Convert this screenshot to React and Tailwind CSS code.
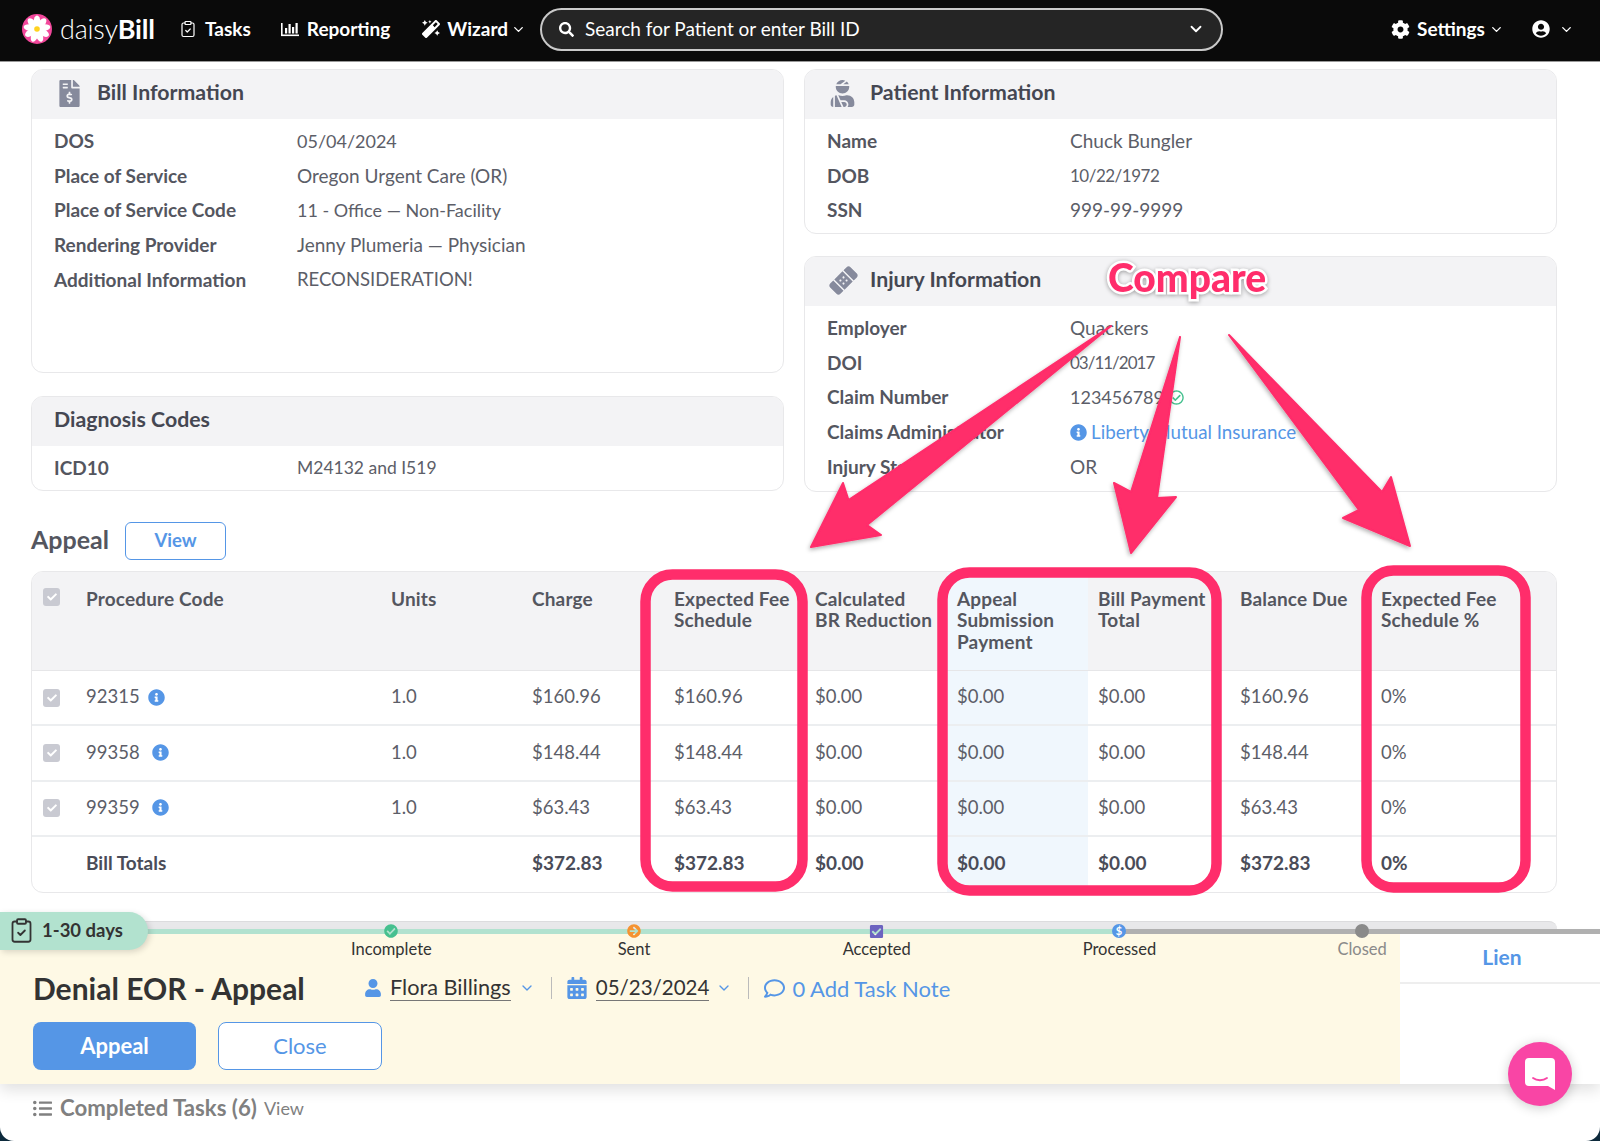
import React from 'react';
import { ChevronDown, ClipboardCheck } from 'lucide-react';
import {
  FaBandAid, FaCalendarAlt, FaCheck, FaCheckCircle, FaArrowCircleRight, FaCheckSquare,
  FaCog, FaFileInvoiceDollar, FaInfoCircle, FaListUl, FaMagic, FaRegComment, FaSearch, FaUser, FaUserCircle, FaUserInjured, FaRegCheckCircle,
} from 'react-icons/fa';

const FONT = "font-['Lato','Open_Sans',sans-serif]";

// === COLUMN GRID FOR THE APPEAL TABLE ===
const COLS = 'grid grid-cols-[44px_305px_141px_142px_141px_142px_141px_142px_141px_1fr]';

const rows = [
  { code: '92315', charge: '$160.96', gap: 'ml-[8px]' },
  { code: '99358', charge: '$148.44', gap: 'ml-[12px]' },
  { code: '99359', charge: '$63.43', gap: 'ml-[12px]' },
];

const Logo = () => (
  <svg width="30" height="30" viewBox="0 0 30 30">
    <circle cx="15" cy="15" r="15" fill="#f2479b" />
    {[0, 40, 80, 120, 160, 200, 240, 280, 320].map((a) => (
      <ellipse key={a} cx="15" cy="7.5" rx="3.3" ry="6" fill="#fff" transform={`rotate(${a} 15 15)`} />
    ))}
    <circle cx="15" cy="15" r="2.8" fill="#ffd21f" />
  </svg>
);

const ReportIcon = () => (
  <svg width="18" height="16" viewBox="0 0 18 16" fill="#fff">
    <rect x="0" y="13.5" width="18" height="1.6" />
    <rect x="0" y="2" width="1.6" height="12" />
    <rect x="4" y="7" width="2.2" height="5.5" />
    <rect x="7.5" y="3" width="2.2" height="9.5" />
    <rect x="11" y="6" width="2.2" height="6.5" />
    <rect x="14.5" y="2" width="2.2" height="10.5" />
  </svg>
);

const Checkbox = () => (
  <div className="flex h-[18px] w-[17px] items-center justify-center rounded-[3px] bg-[#c9cad2]">
    <FaCheck className="text-[10px] text-white" />
  </div>
);

const Card = ({ icon, title, className, children }) => (
  <div className={`overflow-hidden rounded-xl border border-[#e8e8ea] bg-white ${className}`}>
    <div className="flex h-[49px] items-center bg-[#f3f3f5] pb-[3px] text-[21.3px] font-bold text-[#454752]">
      {icon}
      <span>{title}</span>
    </div>
    <div className="pt-[5px]">{children}</div>
  </div>
);

const Row = ({ label, size = 'text-[19px]', children }) => (
  <div className="flex h-[34.7px] items-center">
    <div className="w-[265px] pl-[22px] text-[19px] font-bold text-[#54565f]">{label}</div>
    <div className={`${size} text-[#5c5e68]`}>{children}</div>
  </div>
);

const Step = ({ label, muted }) => (
  <div className={`w-[242.7px] shrink-0 text-center text-[16.5px] leading-[20px] ${muted ? 'text-[#8a8a8a]' : 'text-[#333]'}`}>{label}</div>
);

export default function App() {
  return (
    <div className={`relative h-[1141px] w-[1600px] overflow-hidden bg-[#0d2a3c] ${FONT}`}>
      <div className="flex h-full flex-col rounded-b-[14px] bg-white">

        {/* === NAV === */}
        <div className="relative flex h-[62px] shrink-0 items-center border-b border-[#999] bg-[#0a0a0a] pb-[3px] text-white">
          <div className="ml-[22px]"><Logo /></div>
          <div className="ml-[8px] w-[120px] text-[27px] tracking-[-0.2px]">
            <span className="font-light">daisy</span><span className="font-bold">Bill</span>
          </div>
          <ClipboardCheck size={18} strokeWidth={1.6} className="ml-[-1px]" />
          <span className="ml-[8px] text-[19px] font-bold">Tasks</span>
          <div className="ml-[30px]"><ReportIcon /></div>
          <span className="ml-[8px] text-[19px] font-bold">Reporting</span>
          <FaMagic className="ml-[32px] text-[18px]" />
          <span className="ml-[7px] text-[19px] font-bold">Wizard</span>
          <ChevronDown size={15} strokeWidth={2.2} className="ml-[3px]" />
          <div className="ml-[14px] flex h-[43px] w-[683px] items-center rounded-full border-2 border-[#c9c9c9] bg-[#252525] pl-[17px] pr-[16px]">
            <FaSearch className="text-[15px]" />
            <span className="ml-[11px] flex-1 text-[19px]">Search for Patient or enter Bill ID</span>
            <ChevronDown size={18} strokeWidth={2.4} />
          </div>
          <FaCog className="ml-[168px] text-[19px]" />
          <span className="ml-[7px] text-[19px] font-bold">Settings</span>
          <ChevronDown size={15} strokeWidth={2.2} className="ml-[4px]" />
          <FaUserCircle className="ml-[28px] text-[18px]" />
          <ChevronDown size={15} strokeWidth={2.2} className="ml-[9px]" />
        </div>

        {/* === TOP CARDS === */}
        <div className="mt-[7px] grid grid-cols-[753px_753px] gap-x-[20px] px-[31px]">
          <div className="flex flex-col gap-[23px]">
            <Card
              className="h-[304px]"
              title="Bill Information"
              icon={<FaFileInvoiceDollar className="ml-[24px] mr-[14px] text-[27px] text-[#868a9c]" />}
            >
              <Row label="DOS" size="text-[18px]">05/04/2024</Row>
              <Row label="Place of Service">Oregon Urgent Care (OR)</Row>
              <Row label="Place of Service Code" size="text-[18px]">11 - Office — Non-Facility</Row>
              <Row label="Rendering Provider">Jenny Plumeria — Physician</Row>
              <Row label="Additional Information" size="text-[18.5px]">RECONSIDERATION!</Row>
            </Card>
            <Card className="h-[95px]" title="Diagnosis Codes" icon={<span className="ml-[22px]" />}>
              <Row label="ICD10" size="text-[17.5px]">M24132 and I519</Row>
            </Card>
          </div>
          <div className="flex flex-col gap-[22px]">
            <Card
              className="h-[165px]"
              title="Patient Information"
              icon={<FaUserInjured className="ml-[24px] mr-[14px] text-[27px] text-[#868a9c]" />}
            >
              <Row label="Name">Chuck Bungler</Row>
              <Row label="DOB" size="text-[17px] tracking-[-0.5px]">10/22/1972</Row>
              <Row label="SSN">999-99-9999</Row>
            </Card>
            <Card
              className="h-[236px]"
              title="Injury Information"
              icon={<FaBandAid className="ml-[24px] mr-[12px] -rotate-45 text-[29px] text-[#868a9c]" />}
            >
              <Row label="Employer">Quackers</Row>
              <Row label="DOI" size="text-[17px] tracking-[-1px]">03/11/2017</Row>
              <Row label="Claim Number" size="text-[18px]">
                <span className="flex items-center">123456789<FaRegCheckCircle className="ml-[5px] text-[15px] text-[#46c08f]" /></span>
              </Row>
              <Row label="Claims Administrator" size="text-[18.8px]">
                <span className="flex items-center text-[#5596e6]"><FaInfoCircle className="mr-[4px] text-[17px]" />Liberty Mutual Insurance</span>
              </Row>
              <Row label="Injury State">OR</Row>
            </Card>
          </div>
        </div>

        {/* === APPEAL HEADING === */}
        <div className="mt-[30px] flex h-[38px] items-center px-[31px]">
          <span className="pb-[3px] text-[25px] font-bold text-[#54565f]">Appeal</span>
          <button className="ml-[16px] h-[38px] w-[101px] rounded-[6px] border border-[#5596e6] bg-white text-[18.5px] font-bold text-[#5596e6]">View</button>
        </div>

        {/* === APPEAL TABLE === */}
        <div className="ml-[31px] mr-[43px] mt-[11px] h-[322px] overflow-hidden rounded-xl border border-[#e8e8ea] text-[18.5px] text-[#5c5e68]">
          <div className={`${COLS} h-[99px] border-b border-[#e6e6e8] bg-[#f3f3f5] text-[19px] font-bold leading-[21.4px] tracking-[0.15px] text-[#54565f]`}>
            <div className="pl-[11px] pt-[16px]"><Checkbox /></div>
            <div className="px-[10px] pt-[16px]">Procedure Code</div>
            <div className="px-[10px] pt-[16px]">Units</div>
            <div className="px-[10px] pt-[16px]">Charge</div>
            <div className="pl-[10px] pt-[16px]">Expected Fee Schedule</div>
            <div className="pl-[10px] pt-[16px]">Calculated<br />BR Reduction</div>
            <div className="bg-[#f0f7fd] px-[10px] pt-[16px]">Appeal Submission Payment</div>
            <div className="pl-[10px] pt-[16px]">Bill Payment Total</div>
            <div className="pl-[10px] pt-[16px]">Balance Due</div>
            <div className="px-[10px] pt-[16px]">Expected Fee Schedule %</div>
          </div>
          {rows.map((r) => (
            <div key={r.code} className={`${COLS} h-[55.3px] items-stretch border-b-2 border-[#eceef0]`}>
              <div className="flex items-center pl-[11px]"><Checkbox /></div>
              <div className="flex items-center px-[10px] pb-[1px]">{r.code}<FaInfoCircle className={`${r.gap} text-[17px] text-[#5596e6]`} /></div>
              <div className="flex items-center px-[10px] pb-[1px]">1.0</div>
              <div className="flex items-center px-[10px] pb-[1px]">{r.charge}</div>
              <div className="flex items-center px-[10px] pb-[1px]">{r.charge}</div>
              <div className="flex items-center px-[10px] pb-[1px]">$0.00</div>
              <div className="flex items-center bg-[#f0f7fd] px-[10px] pb-[1px]">$0.00</div>
              <div className="flex items-center px-[10px] pb-[1px]">$0.00</div>
              <div className="flex items-center px-[10px] pb-[1px]">{r.charge}</div>
              <div className="flex items-center px-[10px] pb-[1px]">0%</div>
            </div>
          ))}
          <div className={`${COLS} h-[55px] items-stretch text-[19px] font-bold text-[#4a4c58]`}>
            <div />
            <div className="flex items-center px-[10px] pb-[2px]">Bill Totals</div>
            <div />
            <div className="flex items-center px-[10px] pb-[2px]">$372.83</div>
            <div className="flex items-center px-[10px] pb-[2px]">$372.83</div>
            <div className="flex items-center px-[10px] pb-[2px]">$0.00</div>
            <div className="flex items-center bg-[#f0f7fd] px-[10px] pb-[2px]">$0.00</div>
            <div className="flex items-center px-[10px] pb-[2px]">$0.00</div>
            <div className="flex items-center px-[10px] pb-[2px]">$372.83</div>
            <div className="flex items-center px-[10px] pb-[2px]">0%</div>
          </div>
        </div>

        {/* === TASK PANEL === */}
        <div className="relative mt-[28px]">
          <div className="ml-[31px] mr-[43px] h-[8px] rounded-t-xl border-t border-[#dcdcde] bg-[#e8e8ea]" />
          <div className="flex h-[5px]">
            <div className="w-[1118px] bg-[#b2e2cf]" />
            <div className="flex-1 bg-[#b0b0b0]" />
          </div>

          {/* timeline markers */}
          <FaCheckCircle className="absolute left-[384px] top-[3px] text-[14px] text-[#46c08f]" />
          <FaArrowCircleRight className="absolute left-[627px] top-[3px] text-[14px] text-[#f59331]" />
          <FaCheckSquare className="absolute left-[869px] top-[3px] text-[15px] text-[#6c63c0]" />
          <div className="absolute left-[1112px] top-[3px] flex h-[14px] w-[14px] items-center justify-center rounded-full bg-[#5596e6] text-[11px] font-bold text-white">$</div>
          <div className="absolute left-[1355px] top-[3px] h-[14px] w-[14px] rounded-full bg-[#8a8a8a]" />

          {/* age pill */}
          <div className="absolute left-0 top-[-9px] flex h-[38px] w-[148px] items-center rounded-r-[20px] bg-[#b2e2cf] pb-[1px] pl-[8px] text-[18.5px] font-bold text-[#333] shadow-[2px_2px_6px_rgba(0,0,0,0.15)]">
            <ClipboardCheck size={27} strokeWidth={1.6} />
            <span className="ml-[7px]">1-30 days</span>
          </div>

          <div className="flex shadow-[0_6px_14px_rgba(0,0,0,0.12)]">
            <div className="h-[150px] w-[1400px] bg-[#fef9e5] pt-[5px]">
              <div className="flex pl-[270px]">
                <Step label="Incomplete" />
                <Step label="Sent" />
                <Step label="Accepted" />
                <Step label="Processed" />
                <Step label="Closed" muted />
              </div>
              <div className="flex h-[60px] items-center pb-[2px] pl-[33px] text-[22px]">
                <span className="w-[331px] text-[30px] font-bold text-[#333]">Denial EOR - Appeal</span>
                <FaUser className="text-[18px] text-[#5596e6]" />
                <span className="ml-[8px] border-b border-[#777] text-[21.7px] leading-[25px] text-[#333]">Flora Billings</span>
                <ChevronDown size={16} strokeWidth={2} className="ml-[8px] text-[#5596e6]" />
                <div className="ml-[16px] h-[22px] w-px bg-[#bbb]" />
                <FaCalendarAlt className="ml-[14px] text-[22px] text-[#5596e6]" />
                <span className="ml-[8px] border-b border-[#777] text-[20.5px] leading-[25px] text-[#333]">05/23/2024</span>
                <ChevronDown size={16} strokeWidth={2} className="ml-[7px] text-[#5596e6]" />
                <div className="ml-[16px] h-[22px] w-px bg-[#bbb]" />
                <FaRegComment className="ml-[15px] text-[21px] text-[#5596e6]" />
                <span className="ml-[7px] text-[#5596e6]">0 Add Task Note</span>
              </div>
              <div className="mt-[3px] flex gap-[22px] pl-[33px]">
                <button className="h-[48px] w-[163px] rounded-[8px] bg-[#5596e6] pb-[2px] text-[22px] font-bold text-white">Appeal</button>
                <button className="h-[48px] w-[164px] rounded-[8px] border border-[#5596e6] bg-white pb-[2px] text-[22px] text-[#5596e6]">Close</button>
              </div>
            </div>
            <div className="h-[150px] flex-1 bg-white">
              <div className="flex h-[50px] items-center justify-center border-b-2 border-[#eeeeee] pb-[2px] pl-[4px] text-[21px] font-bold text-[#5596e6]">Lien</div>
            </div>
          </div>

          <div className="flex h-[48px] items-center pl-[33px] text-[#808080]">
            <FaListUl className="text-[19px]" />
            <span className="ml-[8px] text-[22.2px] font-bold">Completed Tasks (6)</span>
            <span className="ml-[7px] text-[18px]">View</span>
          </div>
        </div>
      </div>

      {/* === CHAT BUBBLE === */}
      <div className="absolute left-[1508px] top-[1042px] flex h-[64px] w-[64px] items-center justify-center rounded-full bg-[#f945a5] shadow-[0_2px_12px_rgba(0,0,0,0.2)]">
        <svg width="30" height="32" viewBox="0 0 30 32">
          <path d="M4 0h22a4 4 0 0 1 4 4v28l-7-4H4a4 4 0 0 1-4-4V4a4 4 0 0 1 4-4z" fill="#fff" />
          <path d="M8 20c4 3 10 3 14 0" stroke="#f945a5" strokeWidth="1.8" fill="none" strokeLinecap="round" />
        </svg>
      </div>

      {/* === PINK ANNOTATIONS === */}
      <svg className="pointer-events-none absolute left-0 top-0" width="1600" height="1141" viewBox="0 0 1600 1141">
        <defs>
          <filter id="arrowShadow" x="-20%" y="-20%" width="140%" height="140%">
            <feDropShadow dx="-1" dy="2" stdDeviation="2" floodColor="#000" floodOpacity="0.3" />
          </filter>
        </defs>
        <g fill="none" stroke="#ff2d6b" strokeWidth="10.5">
          <rect x="645.5" y="574.5" width="157" height="312" rx="27" />
          <rect x="942.5" y="572.5" width="274" height="318" rx="27" />
          <rect x="1366.5" y="570.5" width="159" height="317" rx="27" />
        </g>
        <g fill="#ff2d6b" stroke="#ff2d6b" strokeWidth="2" strokeLinejoin="round" filter="url(#arrowShadow)">
          <polygon points="1111,326 867,525 881,535 811,547 843,483 848.5,500" />
          <polygon points="1180,337 1157,498 1176,497 1131,553 1114,483 1131,492" />
          <polygon points="1229,335 1382,492 1391,477 1410,546 1343,518 1359,510" />
        </g>
      </svg>

      <div className="absolute left-[1108px] top-[256px] text-[39px] font-black leading-[42px] text-[#ff2d6b] [-webkit-text-stroke:5px_#fff] [paint-order:stroke_fill] [filter:drop-shadow(0_1px_2px_rgba(0,0,0,0.35))]">
        Compare
      </div>
    </div>
  );
}
